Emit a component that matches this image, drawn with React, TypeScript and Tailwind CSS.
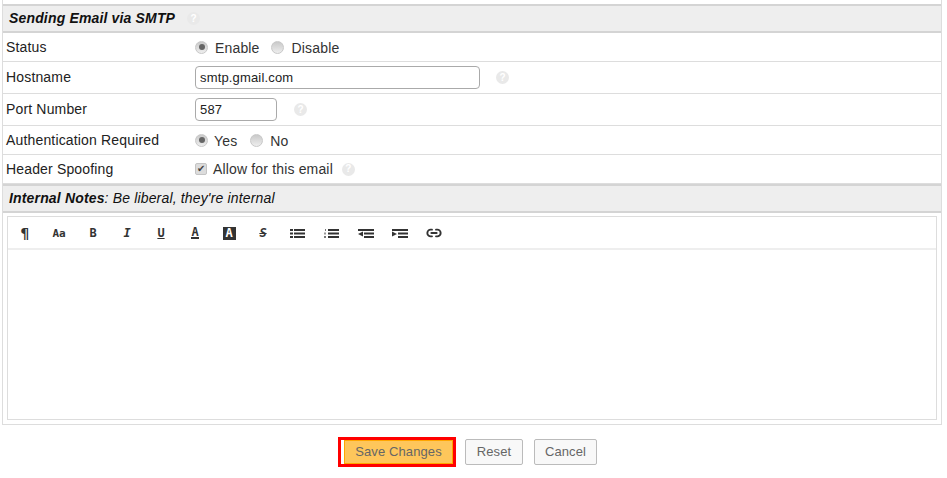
import { Link2 } from "lucide-react";

const Help = ({ className = "" }: { className?: string }) => (
  <span className={`inline-flex h-[13px] w-[13px] items-center justify-center rounded-full bg-[#e9e9e9] text-[10px] font-bold leading-none tracking-normal text-white ${className}`}>
    ?
  </span>
);

const Radio = ({ checked = false }: { checked?: boolean }) => (
  <span className="flex h-[13px] w-[13px] items-center justify-center rounded-full border border-[#c8c8c8] bg-gradient-to-b from-[#c9c9c9] to-[#eeeeee]">
    {checked && <span className="h-[6px] w-[6px] rounded-full bg-[#666]" />}
  </span>
);

const Row = ({ label, h, children }: any) => (
  <div className={`flex items-center border-b border-[#ddd] ${h}`}>
    <div className="w-[192px] pl-[3px] text-[#222]">{label}</div>
    <div className="flex flex-1 items-center">{children}</div>
  </div>
);

const Lines = ({ kind }: { kind: string }) => (
  <svg width="16" height="9" viewBox="0 0 16 9" fill="#333">
    {(kind === "ul" || kind === "ol") && (
      <>
        <rect x="5" y="0" width="11" height="2" />
        <rect x="5" y="3.5" width="11" height="2" />
        <rect x="5" y="7" width="11" height="2" />
      </>
    )}
    {kind === "ul" && (
      <>
        <rect x="1" y="0" width="3" height="2" />
        <rect x="1" y="3.5" width="3" height="2" />
        <rect x="1" y="7" width="3" height="2" />
      </>
    )}
    {kind === "ol" && (
      <>
        <rect x="2" y="0" width="1" height="2" fill="#777" />
        <rect x="1" y="3.5" width="2" height="2" fill="#999" />
        <rect x="1" y="7" width="2" height="2" fill="#777" />
      </>
    )}
    {(kind === "out" || kind === "in") && (
      <>
        <rect x="0" y="0" width="16" height="2" />
        <rect x="6" y="3.5" width="10" height="2" />
        <rect x="6" y="7" width="10" height="2" />
      </>
    )}
    {kind === "out" && <polygon points="0,5 5,2.5 5,7.5" />}
    {kind === "in" && <polygon points="5,5 0,2.5 0,7.5" />}
  </svg>
);

const Tool = ({ children }: any) => (
  <div className="flex h-[32px] w-[34px] items-center justify-center pt-[1px] font-['DejaVu_Sans_Mono',monospace] text-[12px] font-bold leading-none tracking-normal text-[#333]">
    {children}
  </div>
);

export default function App() {
  return (
    <div className="h-[478px] w-[947px] bg-white font-['Liberation_Sans',Arial,sans-serif] text-[14px] tracking-[0.16px]">
      <div className="pl-[2px]">
        <div className="h-[425px] w-[940px] border-x border-b border-[#ddd] pt-[4px]">
          <div className="flex h-[29px] items-center border-y-2 border-[#d4d4d4] bg-[#eee] pl-[6px]">
            <span className="font-bold italic text-[#111]">Sending Email via SMTP</span>
            <Help className="ml-[12px] bg-[#e3e3e3]" />
          </div>
          <Row label="Status" h="h-[29px]">
            <Radio checked />
            <span className="ml-[7px] mt-[2px] text-[#333]">Enable</span>
            <span className="ml-[11px]"><Radio /></span>
            <span className="ml-[8px] mt-[2px] text-[#333]">Disable</span>
          </Row>
          <Row label="Hostname" h="h-[32px]">
            <div className="flex h-[23px] w-[285px] items-center rounded-[4px] border border-[#aaa] pl-[4px] text-[13px] text-[#222]">smtp.gmail.com</div>
            <Help className="ml-[16px]" />
          </Row>
          <Row label="Port Number" h="h-[32px]">
            <div className="flex h-[23px] w-[82px] items-center rounded-[4px] border border-[#aaa] pl-[4px] text-[13px] text-[#222]">587</div>
            <Help className="ml-[17px]" />
          </Row>
          <Row label="Authentication Required" h="h-[29px]">
            <Radio checked />
            <span className="ml-[6px] mt-[2px] text-[#333]">Yes</span>
            <span className="ml-[13px]"><Radio /></span>
            <span className="ml-[7px] mt-[2px] text-[#333]">No</span>
          </Row>
          <Row label="Header Spoofing" h="h-[29px]">
            <span className="flex h-[12px] w-[12px] items-center justify-center rounded-[2px] border border-[#c4c4c4] bg-[#dcdcdc] text-[10px] leading-none tracking-normal text-[#444]">✔</span>
            <span className="ml-[6px] text-[#333]">Allow for this email</span>
            <Help className="ml-[9px]" />
          </Row>
          <div className="flex h-[29px] items-center border-y-2 border-[#d4d4d4] bg-[#eee] pl-[6px] italic text-[#111]">
            <span><b>Internal Notes</b>: Be liberal, they're internal</span>
          </div>
          <div className="mx-[4px] mt-[3px] h-[204px] border border-[#ddd]">
            <div className="flex h-[33px] items-center border-b-2 border-[#eee]">
              <Tool><span className="text-[14px]">¶</span></Tool>
              <Tool><span className="text-[11px]">Aa</span></Tool>
              <Tool>B</Tool>
              <Tool><i>I</i></Tool>
              <Tool><u>U</u></Tool>
              <Tool><span className="border-b-2 border-[#333] leading-[10px]">A</span></Tool>
              <Tool><span className="flex h-[13px] w-[13px] items-center justify-center bg-[#333] text-white">A</span></Tool>
              <Tool><s className="italic">S</s></Tool>
              <Tool><Lines kind="ul" /></Tool>
              <Tool><Lines kind="ol" /></Tool>
              <Tool><span className="pl-[1px]"><Lines kind="out" /></span></Tool>
              <Tool><span className="pl-[1px]"><Lines kind="in" /></span></Tool>
              <Tool><span className="pl-[1px]"><Link2 size={16} strokeWidth={2.8} /></span></Tool>
            </div>
          </div>
        </div>
        <div className="mt-[12px] flex pl-[336px] text-[13px] tracking-[0.1px] text-[#666]">
          <button className="flex h-[30px] w-[118px] border-[3px] border-[#f00] bg-white pl-[3px]">
            <span className="flex flex-1 items-center justify-center border border-[#ffa500] bg-[#fec65b]">Save Changes</span>
          </button>
          <button className="ml-[9px] mt-[2px] h-[26px] w-[58px] rounded-[2px] border border-[#bbb] bg-[#f8f8f8]">Reset</button>
          <button className="ml-[11px] mt-[2px] h-[26px] w-[63px] rounded-[2px] border border-[#bbb] bg-[#f8f8f8]">Cancel</button>
        </div>
      </div>
    </div>
  );
}
